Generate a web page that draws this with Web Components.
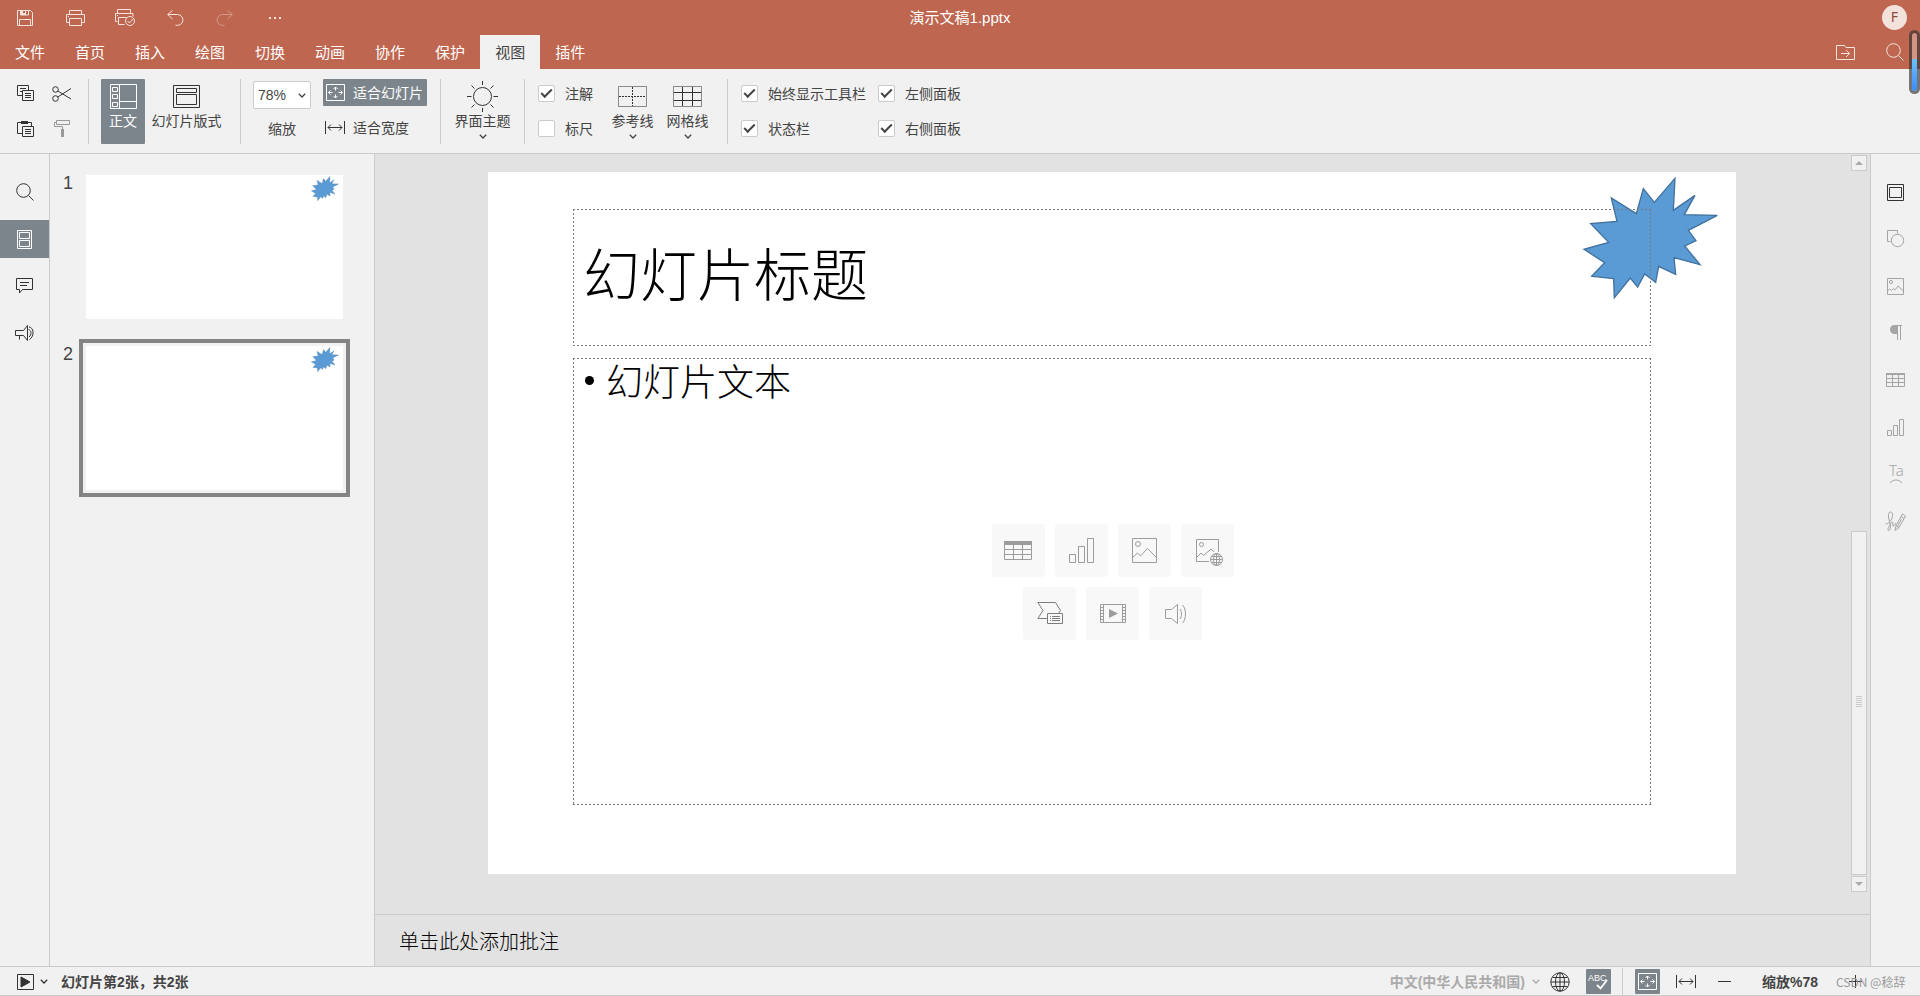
<!DOCTYPE html>
<html lang="zh-CN">
<head>
<meta charset="utf-8">
<title>演示文稿1.pptx</title>
<style>
html, body { margin: 0; height: 100%; }
body {
  --brand: #be664f; --panel: #f1f1f1; --canvas: #e2e2e2; --line: #cbcbcb;
  --active: #7d858c; --ink: #444; --muted: #a5a5a5;
  font: 14px/20px "Liberation Sans", "Noto Sans CJK SC", sans-serif;
  color: var(--ink); background: var(--panel); overflow: hidden;
}
</style>
</head>
<body>
<presentation-editor></presentation-editor>
<script>
const ICONS = {
  save: [16, 16, '<path d="M.5.5h13l2 2v13H.5zM2.5 15.5v-6h11v6"/><path d="M3.5.5v4.500h8V.5"/><path d="M3 0h3v3h2V0h1v5H3z" fill="currentColor" stroke="none"/>'],
  print: [19, 16, '<path d="M3.500 4V.5h12V4M3.500 12.500h-3v-8h18v8h-3M3.500 8.500h12v7h-12z"/><path d="M2 6.500h1"/>'],
  quick: [20, 17, '<path d="M2.500 4V.5h13V4M2.500 12.500h-2v-8h17.500v3M9.500 15.500h-6v-7h8M2 6.500h1"/><circle cx="15" cy="12" r="4.500"/><path d="M12.500 12l2 2 3.500-4"/>'],
  undo: [16, 16, '<path d="M5.500.5L.7 4.500l4.800 4.500M.7 4.500h9.800a5 5 0 0 1 0 10.800h-2"/>'],
  redo: [16, 16, '<path d="M10.500.5l4.800 4-4.800 4.500M15.300 4.500H5.500a5 5 0 0 0 0 10.800h2"/>'],
  dots: [12, 2, '<path d="M0 0h2v2H0zM5 0h2v2H5zM10 0h2v2h-2z" fill="currentColor" stroke="none"/>'],
  folder: [19, 15, '<path d="M.5.5h8l1.500 2h8.500v12H.5zM5 8.500h8.500M10 5l3.500 3.500L10 12"/>'],
  search: [18, 18, '<circle cx="7.500" cy="7.500" r="6.800"/><path d="M12.500 12.500l5 5"/>'],
  copy: [17, 17, '<path d="M5 10.500H.5v-10h11V5M3 3.500h6M3 6.500h2"/><path d="M5.500 5.500h11v10h-11zM8 8.500h6M8 10.500h6M8 12.500h6"/>'],
  cut: [20, 16, '<circle cx="3.500" cy="3.500" r="2.800"/><circle cx="3.500" cy="12.500" r="2.800"/><path d="M5.800 5L19 13M5.800 11L19 2.500"/>'],
  paste: [17, 18, '<path d="M5 13.500H.5v-11h14V6"/><path d="M4 1h7v3H4z" fill="currentColor" stroke="none"/><path d="M5.500 6.500h11v10h-11zM8 9.500h6M8 11.500h6M8 13.500h6"/>'],
  painter: [16, 18, '<path d="M2.500.5h13v4h-13zM2.500 2.500h-2v4h8V9"/><path d="M7 9h3v8H7z" fill="currentColor" stroke="none"/>'],
  normal: [27, 25, '<path d="M.5.5h26v24H.5zM9.500.5v24M9.500 17.500h17"/><path d="M2.500 3.500h5v4h-5zM2.500 10.500h5v4h-5zM2.500 18.500h5v4h-5z"/>'],
  layout: [27, 23, '<path d="M.5.5h26v22H.5zM3.500 3.500h20v4h-20zM3.500 9.500h20v10h-20z"/>'],
  fit: [19, 17, '<path d="M.5.5h18v16H.5z"/><path d="M9.500 3v3.500M9.500 10.500V14M2.500 8.500h4M12.500 8.500h4M7.500 5l2-2 2 2M7.500 12l2 2 2-2M4.500 6.500l-2 2 2 2M14.500 6.500l2 2-2 2"/>'],
  width: [20, 13, '<path d="M.5 0v13M19.500 0v13M3 6.500h14M6 3.500l-3 3 3 3M14 3.500l3 3-3 3"/>'],
  sun: [31, 31, '<circle cx="15.500" cy="15.500" r="9"/><path d="M15.500 0v4M15.500 27v4M0 15.500h4.500M26.500 15.500H31M4.500 4.500l3 3M23.500 23.500l3 3M26.500 4.500l-3 3M7.500 23.500l-3 3"/>'],
  guides: [29, 21, '<path d="M.5.5h28v20H.5z" opacity=".55"/><path d="M14.500 1v19M1 10.500h27" stroke-dasharray="2 1"/>'],
  grid: [29, 21, '<path d="M.5.5h28v20H.5z" opacity=".55"/><path d="M9.500 1v19M19.500 1v19M1 6.500h27M1 14.500h27"/>'],
  down: [8, 5, '<path d="M.8.7L4 4l3.200-3.300" stroke-width="1.300"/>'],
  slides: [15, 19, '<path d="M.5.5h14v18H.5zM2.500 2.500h10v6h-10zM2.500 10.500h10v6h-10z"/>'],
  comment: [17, 16, '<path d="M.5.500h16v11h-10l-3 3.500v-3.500h-3zM4 4.500h9M4 7.500h7"/>'],
  megaphone: [19, 16, '<path d="M.5 5.500h8l4-5v15l-4-5h-8zM4.500 10.500v4M14 2c4.500 0 6 9 .5 12.500M13.500 4.500c3 1 3.500 5 .5 7.500"/>'],
  slide: [17, 17, '<path d="M.5.5h16v16H.5zM2.500 3.500h12v10h-12z"/>'],
  shape: [17, 18, '<path d="M3.500 11.500h-3V.5h10v3"/><circle cx="10.500" cy="10.500" r="6.200"/>'],
  image: [17, 17, '<path d="M.5.5h16v16H.5zM.5 13l2-2 2 1.500 2-2 1.500 1.500 3-4 5.500 5"/><circle cx="4" cy="4" r="1.600"/>'],
  para: [12, 16, '<path d="M7 0H4.500a4.500 4.500 0 0 0 0 9H7z" fill="currentColor" stroke="none"/><path d="M5 .5h7M7.500 0v15M10.500 0v15"/>'],
  table: [19, 14, '<path d="M.5.5h18v13H.5zM.5 5.500h18M.5 9.500h18M6.500 1v12M12.500 1v12"/><path d="M0 0h19v2H0z" fill="currentColor" stroke="none"/>'],
  chart: [17, 17, '<path d="M.5 11.500h4v5h-4zM6.500 6.500h4v10h-4zM12.500.5h4v16h-4z"/>'],
  art: [16, 20, '<text x="1" y="12" font-family="Noto Sans" font-weight="300" font-size="15" stroke="none" fill="currentColor">Ta</text><path d="M2 19c3-4 9-4 12 0"/>'],
  sign: [21, 21, '<path d="M.5 13c3 0 7-4 7-8.500C7.500-1 2.500 0 3.500 6c.5 4 3 8 1.500 12.500-1 2-3 .5-1.500-2C5 14 6 11 7.500 11c1.500 0-.5 4 .5 4 1.500 0 2-2 3-3"/><path d="M10 19.500l1-5L17.500 3l3 2L14 16.500zM16 5.500l3 2M11 15l3 1.500M16.500 8l-4 7.500"/>'],
  bigtable: [28, 19, '<path d="M.5.5h27v18H.5zM.5 8.500h27M.5 13.500h27M9.500 3v16M18.500 3v16"/><path d="M0 0h28v4H0z" fill="currentColor" stroke="none"/>'],
  bigchart: [25, 25, '<path d="M.5 16.500h6v8h-6zM9.500 8.500h6v16h-6zM18.500.5h6v24h-6z"/>'],
  bigimage: [25, 25, '<path d="M.5.5h24v24H.5zM.5 19.500l5-4.500 3 3 7-7.500 9 9"/><circle cx="6" cy="6" r="2.500"/>'],
  web: [23, 23, '<path d="M13 22.500H.5V.5h22V13M.5 18.500l4.500-4.500 2.500 2.500 7.500-6.500 3 3"/><circle cx="5.500" cy="5.500" r="2"/><circle cx="20.500" cy="20.500" r="6"/><ellipse cx="20.500" cy="20.500" rx="3" ry="6"/><path d="M14.500 20.500h12M20.500 14.500v12M15.500 17.500h10M15.500 23.500h10"/>'],
  smart: [26, 23, '<g stroke="#7d7d7d"><path d="M10 16.500H.8l5.200-8L.8.5h17.700l5 8-2 3"/><path d="M10.500 11.500h15v10h-15zM13 14.500h1M13 16.500h1M13 18.500h1M15 14.500h8M15 16.500h8M15 18.500h8"/></g>'],
  video: [26, 19, '<path d="M.5.5h25v18H.5zM3.500.5v18M22.500.5v18M.5 3.500h3M.5 6.500h3M.5 9.500h3M.5 12.500h3M.5 15.500h3M22.500 3.500h3M22.500 6.500h3M22.500 9.500h3M22.500 12.500h3M22.500 15.500h3"/><path d="M9 5l9 4.500L9 14z" fill="currentColor" stroke="none"/>'],
  audio: [21, 20, '<path d="M.5 5.500h6l6-5v19l-6-5h-6zM15 5c2 3 2 7 0 10M17.500 1c4 4 4 14 0 18"/>'],
  play: [17, 16, '<path d="M.5.5h16v15H.5z"/><path d="M4 3l9 5-9 5z" fill="currentColor"/>'],
  globe: [20, 20, '<circle cx="10" cy="10" r="9.200"/><ellipse cx="10" cy="10" rx="4.500" ry="9.200"/><path d="M10 1v18M1 10h18M2.500 5.500h15M2.500 14.500h15"/>'],
  spell: [20, 18, '<text x="0" y="8" font-family="Liberation Sans" font-size="9" font-weight="400" stroke="none" fill="currentColor">ABC</text><path d="M9 12l3.500 3.500L19 7" stroke-width="1.800"/>'],
  minus: [13, 13, '<path d="M0 6.500h13"/>'],
  plus: [13, 13, '<path d="M0 6.500h13M6.500 0v13"/>']
};

function define(name, markup, setup) {
  const template = document.createElement('template');
  template.innerHTML = markup;
  customElements.define(name, class extends HTMLElement {
    connectedCallback() {
      if (this.shadowRoot) return;
      const root = this.attachShadow({ mode: 'open' });
      root.append(template.content.cloneNode(true));
      if (setup) setup(this, root);
    }
  });
}

define('ui-icon', '<style>:host{display:inline-flex;flex:none}svg{display:block;overflow:visible}</style>', (el, root) => {
  const [w, h, body] = ICONS[el.getAttribute('name')];
  root.innerHTML += `<svg width="${w}" height="${h}" viewBox="0 0 ${w} ${h}" fill="none" stroke="currentColor" aria-hidden="true">${body}</svg>`;
});

/* Starburst drawn in slide units, shared by the slide and its thumbnails */
define('slide-star', `<style>:host{position:absolute;inset:0;display:block}svg{display:block;width:100%;height:100%}</style>
<svg viewBox="0 0 1248 702"><polygon transform="translate(1072 -7) scale(.3333)" fill="#5b9bd5" stroke="#41719c" stroke-width="4" points="345,40 340,136 405,91 373,149 472,151 385,196 408,227 374,243 420,299 342,278 347,328 296,304 287,352 254,327 233,366 211,339 163,398 161,341 95,334 134,293 72,253 146,232 92,176 171,169 154,99 229,146 250,71 283,112"/></svg>`);

define('app-header', `<style>
:host{display:grid;grid-template-columns:1fr auto 1fr;align-items:center;height:35px;background:var(--brand);color:#fff;font-size:15px}
.quick{display:flex}
button{width:50px;height:35px;padding:0;border:0;background:none;color:#f6e3de;display:flex;align-items:center;justify-content:center}
button:disabled{opacity:.4}
h1{margin:0;font-size:15px;font-weight:400;line-height:20px}
.avatar{justify-self:end;margin-right:13px;width:25px;height:25px;border-radius:50%;background:#f3e1dc;color:#8f4b3a;font:14px/24px "Noto Sans",sans-serif;text-align:center}
</style>
<div class="quick">
<button aria-label="保存"><ui-icon name="save"></ui-icon></button>
<button aria-label="打印"><ui-icon name="print"></ui-icon></button>
<button aria-label="快速打印"><ui-icon name="quick"></ui-icon></button>
<button aria-label="撤消"><ui-icon name="undo"></ui-icon></button>
<button aria-label="重做" disabled><ui-icon name="redo"></ui-icon></button>
<button aria-label="更多"><ui-icon name="dots"></ui-icon></button>
</div>
<h1>演示文稿1.pptx</h1><div class="avatar">F</div>`);

define('ribbon-tabs', `<style>
:host{display:flex;justify-content:space-between;height:34px;background:var(--brand)}
nav,.tools{display:flex}
button{border:0;background:none;padding:0 15px;height:34px;font:15px/20px "Noto Sans CJK SC",sans-serif;color:#fff}
button[aria-selected=true]{background:var(--panel);color:var(--ink)}
.tools button{width:50px;padding:0;display:flex;align-items:center;justify-content:center;color:#f6e3de}
</style>
<nav role="tablist"><button role="tab">文件</button><button role="tab">首页</button><button role="tab">插入</button><button role="tab">绘图</button><button role="tab">切换</button><button role="tab">动画</button><button role="tab">协作</button><button role="tab">保护</button><button role="tab" aria-selected="true">视图</button><button role="tab">插件</button></nav>
<div class="tools"><button aria-label="打开文件位置"><ui-icon name="folder"></ui-icon></button><button aria-label="搜索"><ui-icon name="search"></ui-icon></button></div>`);

define('big-button', `<style>
:host{display:flex}
button{flex:1;border:0;border-radius:1px;padding:5px 0 0;background:none;font:inherit;color:inherit;display:flex;flex-direction:column;align-items:center}
:host([active]) button{background:var(--active);color:#fff}
.pic{height:25px;display:flex;align-items:center;color:#333}
:host([active]) .pic{color:#fff}
.text{line-height:20px;margin-top:2px;white-space:nowrap}
.more{display:none;margin-top:3px}
:host([menu]) .more{display:flex}
</style>
<button><span class="pic"></span><span class="text"><slot></slot></span><ui-icon class="more" name="down"></ui-icon></button>`, (el, root) => {
  root.querySelector('.pic').innerHTML = `<ui-icon name="${el.getAttribute('icon')}"></ui-icon>`;
});

define('check-field', `<style>
:host{display:flex;align-items:center;height:29px}
label{display:flex;align-items:center;gap:10px;white-space:nowrap;line-height:20px}
input{appearance:none;margin:0;width:17px;height:17px;flex:none;background:#fff;border:1px solid var(--line);border-radius:2px;display:grid;place-items:center}
input:checked::before{content:"";width:9px;height:4px;border:solid #444;border-width:0 0 2px 2px;transform:rotate(-45deg);margin-bottom:4px}
</style><label><input type="checkbox"><span></span></label>`, (el, root) => {
  root.querySelector('input').checked = el.hasAttribute('checked');
  root.querySelector('span').textContent = el.getAttribute('label');
});

define('view-ribbon', `<style>
:host{display:flex;height:65px;padding:10px 11px 9px;border-bottom:1px solid var(--line);background:var(--panel)}
.sep{width:1px;background:var(--line);margin:0 12px}
.clip{display:grid;grid-template-columns:28px 28px;grid-auto-rows:29px;gap:6px 9px}
button{border:0;padding:0;background:none;font:inherit;color:inherit;display:flex;align-items:center;justify-content:center}
.clip button{color:#333}.clip button:disabled{color:#999}
.normal{width:44px}.layout{width:83px}.theme{width:59px}.lines{width:55px}
.zoom{width:58px;margin-right:12px;display:flex;flex-direction:column;gap:10px;align-items:center}
.pick{position:relative;display:flex;width:100%;margin-top:2px}
select{appearance:none;width:100%;height:28px;border:1px solid var(--line);border-radius:2px;background:#fff;padding:0 0 0 4px;font:14px/20px "Liberation Sans",sans-serif;color:var(--ink)}
.pick ui-icon{position:absolute;right:5px;top:12px;pointer-events:none}
.fits{display:flex;flex-direction:column;gap:8px;width:104px;margin-right:1px}
.fits button{height:27px;border-radius:1px;justify-content:flex-start;gap:8px;padding-left:2px;white-space:nowrap}
.fits .on{background:var(--active);color:#fff;padding-left:3px}
.fits button:not(.on) ui-icon{color:#333}
.checks{display:grid;grid-auto-rows:29px;row-gap:6px}
.one{width:67px;padding-left:1px}.two{grid-template-columns:auto auto;column-gap:12px;padding-left:1px}
</style>
<div class="clip"><button aria-label="复制"><ui-icon name="copy"></ui-icon></button><button aria-label="剪切"><ui-icon name="cut"></ui-icon></button><button aria-label="粘贴"><ui-icon name="paste"></ui-icon></button><button aria-label="格式刷" disabled><ui-icon name="painter"></ui-icon></button></div>
<div class="sep"></div>
<big-button class="normal" icon="normal" active>正文</big-button><big-button class="layout" icon="layout">幻灯片版式</big-button>
<div class="sep"></div>
<div class="zoom"><span class="pick"><select id="z"><option>78%</option></select><ui-icon name="down"></ui-icon></span><label for="z">缩放</label></div>
<div class="fits"><button class="on"><ui-icon name="fit"></ui-icon>适合幻灯片</button><button><ui-icon name="width"></ui-icon>适合宽度</button></div>
<div class="sep"></div>
<big-button class="theme" icon="sun" menu>界面主题</big-button>
<div class="sep"></div>
<div class="checks one"><check-field label="注解" checked></check-field><check-field label="标尺"></check-field></div>
<big-button class="lines" icon="guides" menu>参考线</big-button><big-button class="lines" icon="grid" menu>网格线</big-button>
<div class="sep"></div>
<div class="checks two"><check-field label="始终显示工具栏" checked></check-field><check-field label="左侧面板" checked></check-field><check-field label="状态栏" checked></check-field><check-field label="右侧面板" checked></check-field></div>`);

define('side-rail', `<style>
:host{display:flex;flex-direction:column;gap:9px;width:49px;padding-top:19px;background:var(--panel)}
button{height:38px;border:0;padding:0;background:none;color:#333;display:flex;align-items:center;justify-content:center}
button.on{background:var(--active);color:#fff}
button.off{color:var(--muted)}
</style>`, (el, root) => {
  for (const item of el.getAttribute('items').split(' ')) {
    const [name, state] = item.split(':');
    const b = document.createElement('button');
    b.className = state || '';
    b.setAttribute('aria-label', name);
    b.innerHTML = `<ui-icon name="${name}"></ui-icon>`;
    root.append(b);
  }
});

define('slide-thumb', `<style>
:host{display:flex;font-size:18px;line-height:20px}
.no{width:29px;padding:5px 0 0 13px;box-sizing:border-box}
.frame{flex:1;border:4px solid transparent;padding:3px}
:host([selected]) .frame{border-color:#848484}
.page{position:relative;background:#fff;height:144px}
</style><span class="no"><slot></slot></span><div class="frame"><div class="page"><slide-star></slide-star></div></div>`);

define('thumb-panel', `<style>
:host{display:flex;flex-direction:column;gap:13px;width:300px;padding:14px 24px 0 0;background:var(--panel);border:solid var(--line);border-width:0 1px}
</style><slide-thumb>1</slide-thumb><slide-thumb selected>2</slide-thumb>`);

define('dashed-box', `<style>
:host{display:block;position:relative;
--h:repeating-linear-gradient(90deg,#7a7a7a 0 2px,transparent 2px 4px);--v:repeating-linear-gradient(#7a7a7a 0 2px,transparent 2px 4px);
background:var(--h) top/100% 1px no-repeat,var(--h) bottom/100% 1px no-repeat,var(--v) left/1px 100% no-repeat,var(--v) right/1px 100% no-repeat}
</style><slot></slot>`);

define('slide-page', `<style>
:host{display:flex;flex-direction:column;gap:12px;position:relative;box-sizing:border-box;aspect-ratio:16/9;padding:37px 85px 69px;background:#fff;color:#000;font-family:"Noto Sans CJK SC",sans-serif;font-weight:300}
.title{box-sizing:border-box;height:137px;display:flex;align-items:center;padding:0 10px 14px}
h2{margin:0;font-weight:300;font-size:57px;line-height:68px}
.body{flex:1;display:flex;flex-direction:column}
ul{margin:0;padding:0 12px;list-style:none}
li{display:flex;align-items:center;gap:12px;font-size:37px;line-height:44px}
li::before{content:"";width:9px;height:9px;border-radius:50%;background:#000}
.insert{flex:1;display:flex;flex-wrap:wrap;gap:10px;width:242px;padding-left:1px;margin:122px auto 0;align-content:flex-start;justify-content:center}
button{width:53px;height:53px;border:0;border-radius:3px;background:#f8f8f8;color:#9c9c9c;padding:0;display:flex;align-items:center;justify-content:center}
</style>
<slide-star></slide-star>
<dashed-box class="title"><h2>幻灯片标题</h2></dashed-box>
<dashed-box class="body"><ul><li>幻灯片文本</li></ul>
<div class="insert"><button aria-label="表格"><ui-icon name="bigtable"></ui-icon></button><button aria-label="图表"><ui-icon name="bigchart"></ui-icon></button><button aria-label="图片"><ui-icon name="bigimage"></ui-icon></button><button aria-label="网络图片"><ui-icon name="web"></ui-icon></button><button aria-label="智能图形"><ui-icon name="smart"></ui-icon></button><button aria-label="视频"><ui-icon name="video"></ui-icon></button><button aria-label="音频"><ui-icon name="audio"></ui-icon></button></div>
</dashed-box>`);

define('scroll-rail', `<style>
:host{display:flex;flex-direction:column;width:16px;padding:1px 3px 22px 2px}
button,.thumb{box-sizing:border-box;border:1px solid var(--line);background:var(--panel)}
button{height:16px;padding:0;display:grid;place-items:center;flex:none}
button::before{content:"";border:4px solid transparent;border-top:0;border-bottom-color:#aaa}
button.dn::before{border-top:4px solid #aaa;border-bottom:0}
.track{flex:1;display:flex;flex-direction:column;justify-content:flex-end;margin-bottom:1px}
.thumb{height:344px;padding-bottom:3px;display:grid;place-items:center}
.thumb::before{content:"";width:6px;height:11px;background:repeating-linear-gradient(#cbcbcb 0 1px,transparent 1px 2px)}
</style><button aria-label="向上滚动"></button><div class="track"><div class="thumb"></div></div><button class="dn" aria-label="向下滚动"></button>`);

define('slide-canvas', `<style>
:host{flex:1;min-width:0;display:flex;flex-direction:column;background:var(--canvas);border-right:1px solid var(--line)}
.view{flex:1;min-height:0;display:flex}
.area{flex:1;padding:18px 113px 0}
.notes{display:flex;height:51px;border-top:1px solid var(--line);padding:0 24px}
textarea{flex:1;box-sizing:border-box;height:51px;border:0;padding:12px 0 0;margin:0;background:none;resize:none;outline:0;overflow:hidden;font:300 20px/28px "Noto Sans CJK SC",sans-serif;color:#000}
</style><div class="view"><div class="area"><slide-page></slide-page></div><scroll-rail></scroll-rail></div>
<div class="notes"><textarea aria-label="批注">单击此处添加批注</textarea></div>`);

define('status-bar', `<style>
:host{display:flex;justify-content:space-between;height:28px;border:solid var(--line);border-width:1px 0;background:var(--panel);font-weight:700}
.side{display:flex;align-items:center;padding-top:1px}
button{border:0;padding:0;background:none;font:inherit;color:#333;display:flex;align-items:center;justify-content:center}
.left{padding-left:17px}.left .t{margin-left:13px}
.gap{gap:6px}
.lang{color:#aaa;gap:7px;margin-right:10px}
.on{width:25px;height:25px;background:var(--active);color:#fff;border-radius:1px}
.spell{margin:0 11px 0 16px}
.sep{width:1px;height:28px;background:var(--line);margin-right:12px}
.wide{margin:0 22px 0 16px}
.value{margin:0 31px}
.end{position:relative;width:71px;height:28px;display:flex;align-items:center}
.mark{position:absolute;left:-13px;top:4px;font:12px/20px "Noto Sans CJK SC",sans-serif;color:#999;white-space:nowrap}
</style>
<div class="side left"><button class="gap" aria-label="开始幻灯片放映"><ui-icon name="play"></ui-icon><ui-icon name="down"></ui-icon></button><span class="t">幻灯片第2张，共2张</span></div>
<div class="side"><button class="lang">中文(中华人民共和国)<ui-icon name="down"></ui-icon></button><button aria-label="语言"><ui-icon name="globe"></ui-icon></button><button class="on spell" aria-label="拼写检查"><ui-icon name="spell"></ui-icon></button><div class="sep"></div><button class="on" aria-label="适合幻灯片"><ui-icon name="fit"></ui-icon></button><button class="wide" aria-label="适合宽度"><ui-icon name="width"></ui-icon></button><button aria-label="缩小"><ui-icon name="minus"></ui-icon></button><span class="value">缩放%78</span><div class="end"><button aria-label="放大"><ui-icon name="plus"></ui-icon></button><span class="mark">CSDN @稔辞</span></div></div>`);

/* Floating level indicator that sits over the right window edge */
define('level-pill', `<style>
:host{position:absolute;right:0;top:30px;width:5px;height:58px;border:3px solid rgba(50,50,50,.65);border-radius:6px;background:linear-gradient(rgba(255,255,255,.3) 0 26px,#6ac0fa 26px,#3b8cff) padding-box}
</style>`);

define('presentation-editor', `<style>
:host{display:flex;flex-direction:column;height:100vh;position:relative;overflow:hidden}
main{flex:1;min-height:0;display:flex}
</style>
<app-header></app-header><ribbon-tabs></ribbon-tabs><view-ribbon></view-ribbon>
<main><side-rail items="search slides:on comment megaphone"></side-rail><thumb-panel></thumb-panel><slide-canvas></slide-canvas><side-rail items="slide shape:off image:off para:off table:off chart:off art:off sign:off"></side-rail></main>
<status-bar></status-bar><level-pill></level-pill>`);
</script>
</body>
</html>
